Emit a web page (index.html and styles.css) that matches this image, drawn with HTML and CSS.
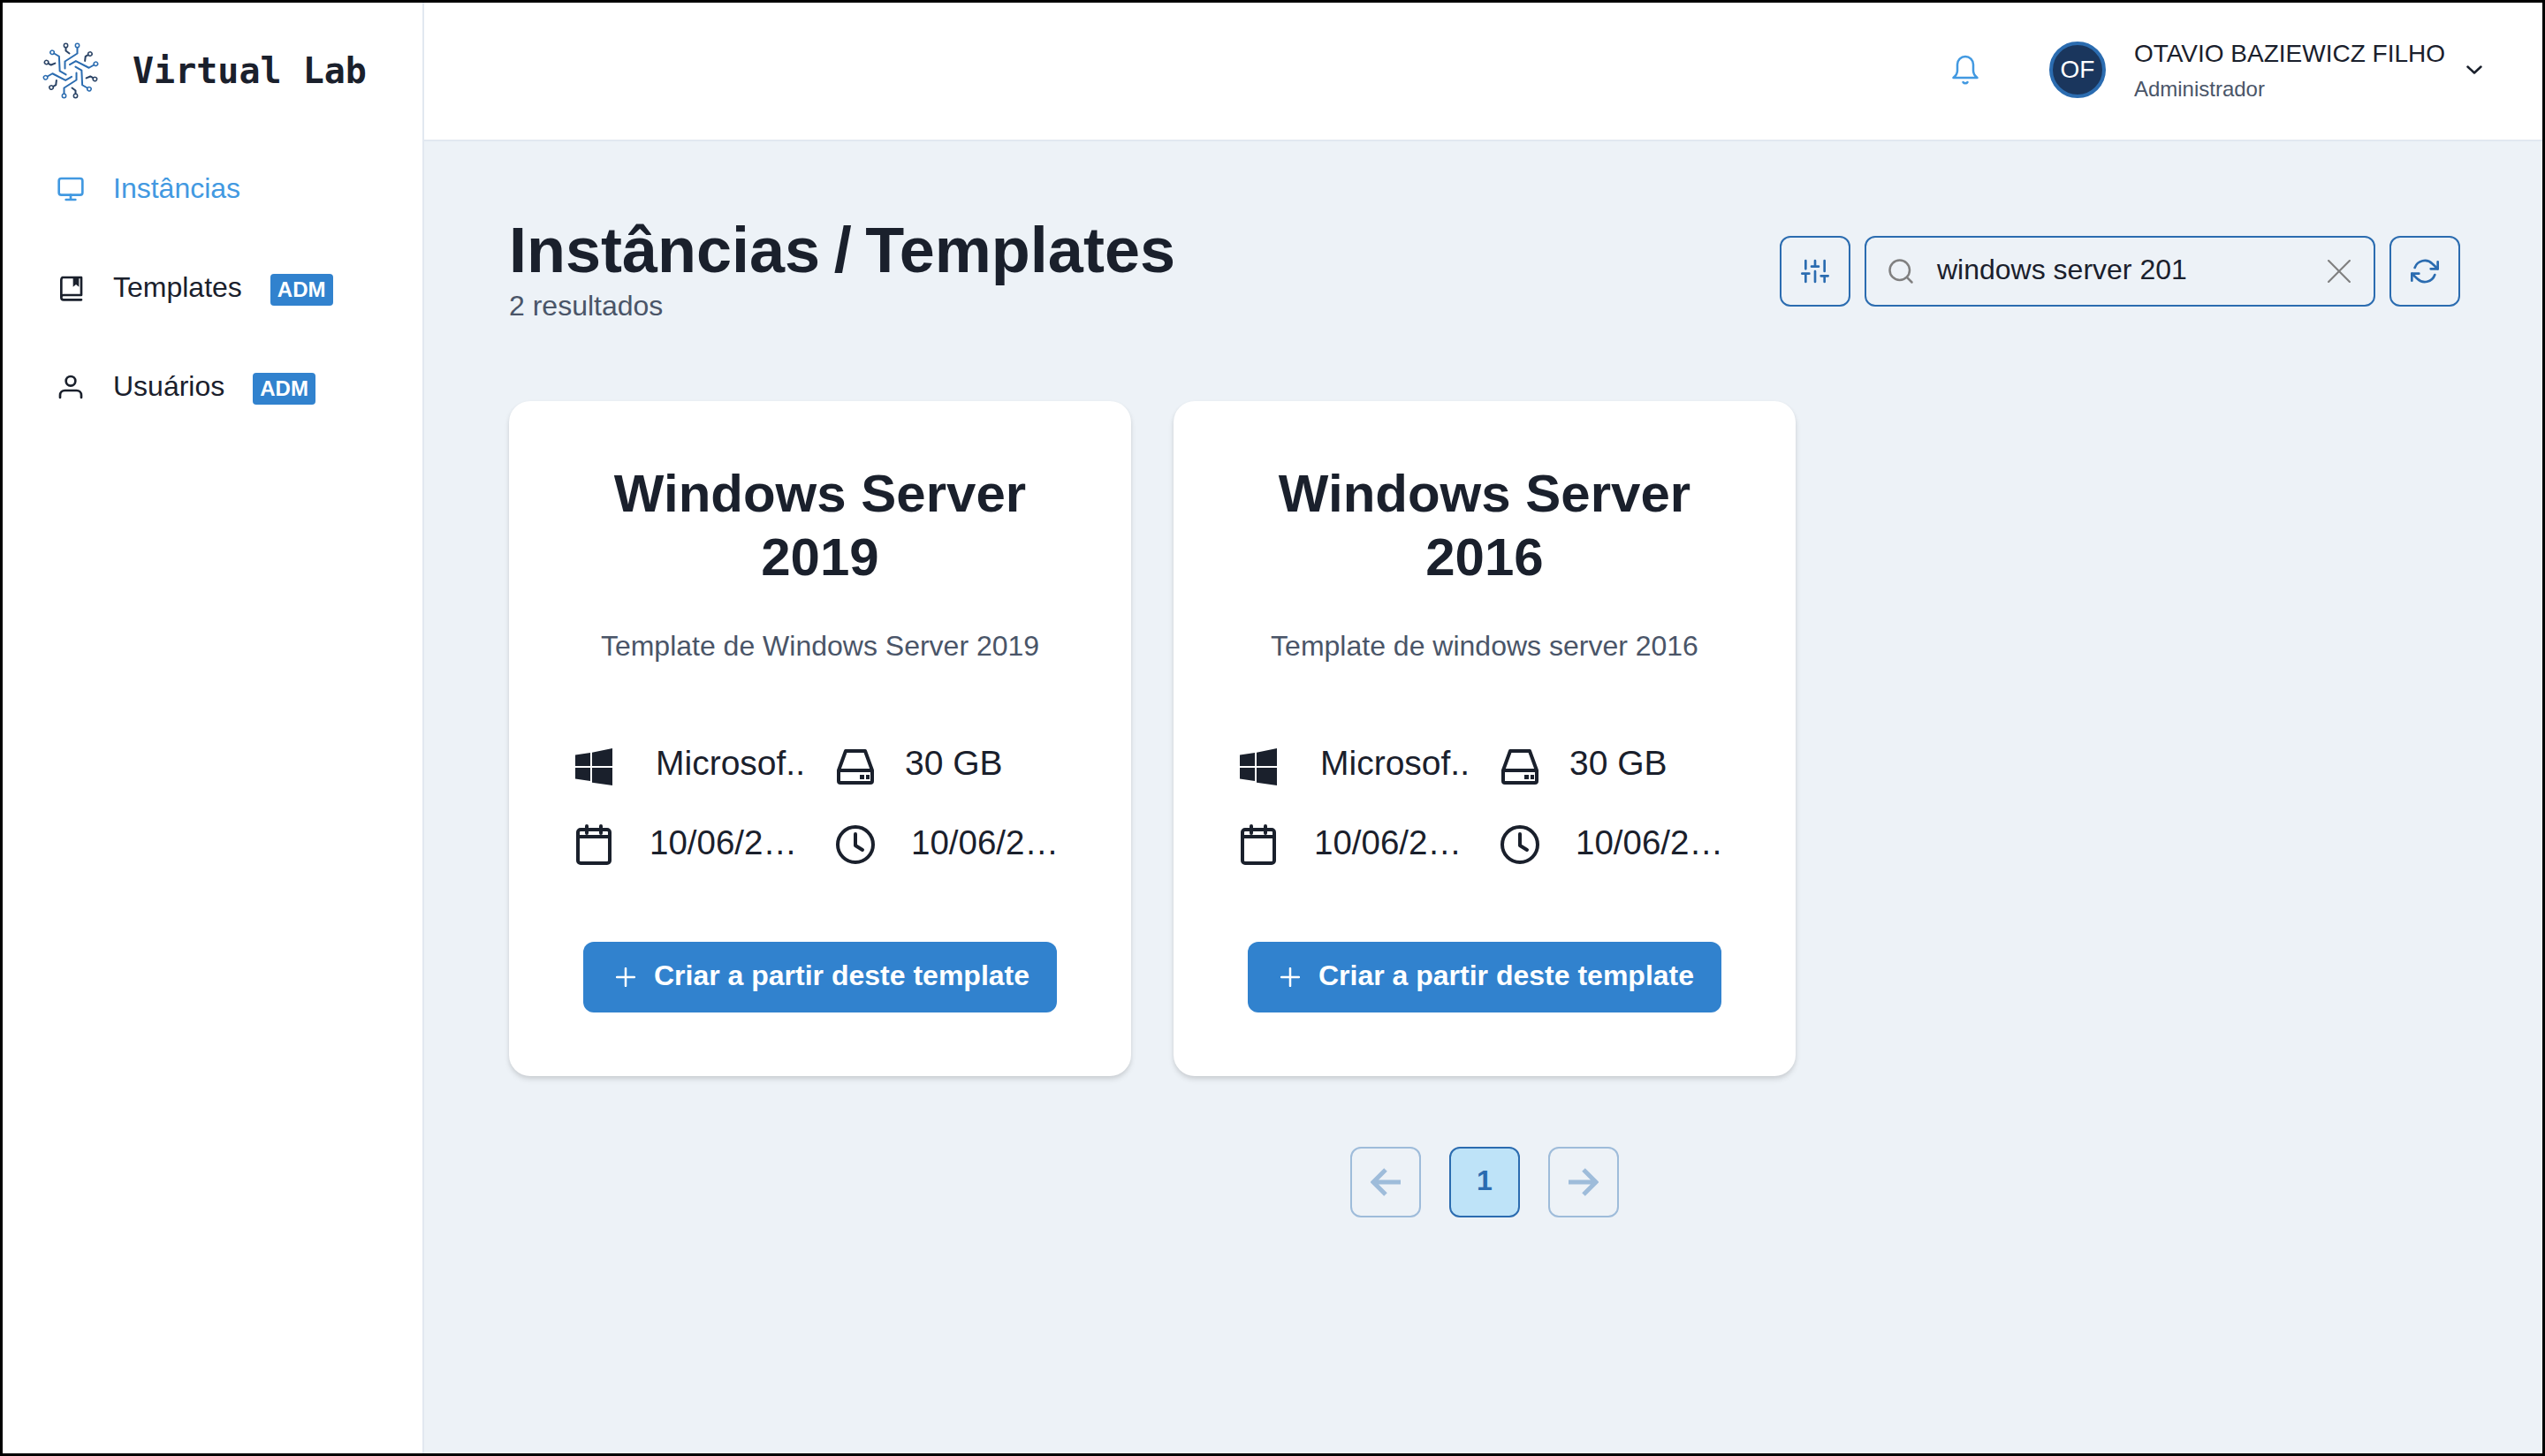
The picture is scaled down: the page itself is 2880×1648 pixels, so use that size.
FILE: index.html
```html
<!DOCTYPE html>
<html lang="pt-BR">
<head>
  <meta charset="UTF-8">
  <meta name="viewport" content="width=device-width, initial-scale=1.0">
  <title>Virtual Lab</title>
  <link rel="stylesheet" href="styles.css">
</head>
<body>
  <div class="app">
    <!-- Menu lateral -->
    <aside class="sidebar">
      <div class="brand">
        <svg class="brand-logo" viewBox="0 0 64 64" fill="none" stroke-linecap="round" stroke-linejoin="round">
          <defs>
            <g id="arm">
              <path d="M39.5 3.5v9l-14 9v8" stroke="#2b6cb0" stroke-width="2"/>
              <circle cx="39.5" cy="3.5" r="2.2" stroke="#2b6cb0" stroke-width="1.5" fill="#fff"/>
              <path d="M26.5 3.5v6l4 3" stroke="#2a4365" stroke-width="2"/>
              <circle cx="26.5" cy="3.5" r="2.2" stroke="#2a4365" stroke-width="1.5" fill="#fff"/>
            </g>
          </defs>
          <use href="#arm"/>
          <use href="#arm" transform="rotate(60 32 32)"/>
          <use href="#arm" transform="rotate(120 32 32)"/>
          <use href="#arm" transform="rotate(180 32 32)"/>
          <use href="#arm" transform="rotate(240 32 32)"/>
          <use href="#arm" transform="rotate(300 32 32)"/>
        </svg>
        <span class="brand-name">Virtual Lab</span>
      </div>
      <nav class="nav">
        <a class="nav-item nav-item-active">
          <svg class="nav-icon" viewBox="0 0 24 24" fill="none" stroke="currentColor" stroke-width="2" stroke-linecap="round" stroke-linejoin="round"><rect x="2" y="3" width="20" height="14" rx="2"/><path d="M8 21h8M12 17v4"/></svg>
          <span class="nav-label">Instâncias</span>
        </a>
        <a class="nav-item">
          <svg class="nav-icon" viewBox="0 0 24 24" fill="none" stroke="currentColor" stroke-width="2" stroke-linecap="round" stroke-linejoin="round"><path d="M21 18H6a2 2 0 0 0-2 2V5a3 3 0 0 1 1-2h16v15zM21 22H6a2 2 0 0 1-2-2"/><path d="M14 3h5v8l-2.500-2-2.500 2z" fill="currentColor" stroke="none"/></svg>
          <span class="nav-label">Templates</span>
          <span class="badge">ADM</span>
        </a>
        <a class="nav-item">
          <svg class="nav-icon" viewBox="0 0 24 24" fill="none" stroke="currentColor" stroke-width="2" stroke-linecap="round" stroke-linejoin="round"><circle cx="12" cy="7" r="4"/><path d="M3 21v-2a4 4 0 0 1 4-4h10a4 4 0 0 1 4 4v2"/></svg>
          <span class="nav-label">Usuários</span>
          <span class="badge">ADM</span>
        </a>
      </nav>
    </aside>

    <div class="content">
      <!-- Barra superior -->
      <header class="topbar">
        <svg class="bell" viewBox="0 0 30 34" fill="none" stroke="currentColor" stroke-width="2.500" stroke-linecap="round" stroke-linejoin="round"><path d="M15 2a9 9 0 0 0-9 9v7c0 3-2 6-4.500 8h27c-2.500-2-4.500-5-4.500-8v-7a9 9 0 0 0-9-9z"/><path d="M12.500 31a3 3 0 0 0 5 0"/></svg>
        <div class="avatar">OF</div>
        <div class="user">
          <div class="user-name">OTAVIO BAZIEWICZ FILHO</div>
          <div class="user-role">Administrador</div>
        </div>
        <svg class="chevron" viewBox="0 0 18 10" fill="none" stroke="currentColor" stroke-width="2.500" stroke-linecap="round" stroke-linejoin="round"><path d="M1.500 1.500L9 8.500l7.500-7"/></svg>
      </header>

      <main class="page">
        <div class="page-head">
          <div>
            <h1 class="page-title">Instâncias / Templates</h1>
            <div class="page-count">2 resultados</div>
          </div>
          <div class="toolbar">
            <button class="icon-btn">
              <svg class="toolbar-icon" viewBox="0 0 24 24" fill="none" stroke="currentColor" stroke-width="2" stroke-linecap="round" stroke-linejoin="round"><path d="M4 21v-7M4 10V3M12 21v-9M12 8V3M20 21v-5M20 12V3M1 14h6M9 8h6M17 16h6"/></svg>
            </button>
            <div class="search">
              <svg class="search-icon" viewBox="0 0 24 24" fill="none" stroke="currentColor" stroke-width="2" stroke-linecap="round" stroke-linejoin="round"><circle cx="11" cy="11" r="9"/><path d="M22 22l-4.500-4.500"/></svg>
              <span class="search-text">windows server 201</span>
              <svg class="search-clear" viewBox="0 0 24 24" fill="none" stroke="currentColor" stroke-width="2" stroke-linecap="round"><path d="M1 1l22 22M23 1L1 23"/></svg>
            </div>
            <button class="icon-btn">
              <svg class="toolbar-icon" viewBox="0 0 24 24" fill="none" stroke="currentColor" stroke-width="2" stroke-linecap="round" stroke-linejoin="round"><path d="M23 4v6h-6M1 20v-6h6"/><path d="M3.510 9a9 9 0 0 1 14.850-3.360L23 10M1 14l4.640 4.360A9 9 0 0 0 20.490 15"/></svg>
            </button>
          </div>
        </div>

        <div class="cards">
          <article class="card">
            <h2 class="card-title">Windows Server 2019</h2>
            <p class="card-desc">Template de Windows Server 2019</p>
            <div class="specs">
              <div class="spec">
                <svg class="spec-icon" viewBox="0 0 48 48" fill="currentColor"><path d="M3 10.500l17-2.400v15H3zM22 7.800L45 3v20H22zM3 25h17v15L3 37.500zM22 25h23v20l-23-3.300z"/></svg>
                <span class="spec-text spec-os">Microsof..</span>
              </div>
              <div class="spec">
                <svg class="spec-icon" viewBox="0 0 48 48" fill="none" stroke="currentColor" stroke-width="4" stroke-linejoin="round"><path d="M13 6h22l8 22v12a2 2 0 0 1-2 2H7a2 2 0 0 1-2-2V28z"/><path d="M5 28h38"/><path d="M29 33h5v5h-5zM36 33h4v5h-4z" fill="currentColor" stroke="none"/></svg>
                <span class="spec-text spec-disk">30 GB</span>
              </div>
              <div class="spec">
                <svg class="spec-icon" viewBox="0 0 48 48" fill="none" stroke="currentColor" stroke-width="4" stroke-linecap="round" stroke-linejoin="round"><rect x="6" y="7" width="36" height="38" rx="3"/><path d="M6 15h36M16 3v8M32 3v8"/></svg>
                <span class="spec-text spec-date">10/06/2…</span>
              </div>
              <div class="spec">
                <svg class="spec-icon" viewBox="0 0 48 48" fill="none" stroke="currentColor" stroke-width="4" stroke-linecap="round" stroke-linejoin="round"><circle cx="24" cy="24" r="20"/><path d="M24 12v13l8 5"/></svg>
                <span class="spec-text spec-date">10/06/2…</span>
              </div>
            </div>
            <button class="create-btn">
              <svg class="create-icon" viewBox="0 0 22 22" fill="none" stroke="currentColor" stroke-width="2.500" stroke-linecap="round"><path d="M11 1v20M1 11h20"/></svg>
              Criar a partir deste template
            </button>
          </article>

          <article class="card">
            <h2 class="card-title">Windows Server 2016</h2>
            <p class="card-desc">Template de windows server 2016</p>
            <div class="specs">
              <div class="spec">
                <svg class="spec-icon" viewBox="0 0 48 48" fill="currentColor"><path d="M3 10.500l17-2.400v15H3zM22 7.800L45 3v20H22zM3 25h17v15L3 37.500zM22 25h23v20l-23-3.300z"/></svg>
                <span class="spec-text spec-os">Microsof..</span>
              </div>
              <div class="spec">
                <svg class="spec-icon" viewBox="0 0 48 48" fill="none" stroke="currentColor" stroke-width="4" stroke-linejoin="round"><path d="M13 6h22l8 22v12a2 2 0 0 1-2 2H7a2 2 0 0 1-2-2V28z"/><path d="M5 28h38"/><path d="M29 33h5v5h-5zM36 33h4v5h-4z" fill="currentColor" stroke="none"/></svg>
                <span class="spec-text spec-disk">30 GB</span>
              </div>
              <div class="spec">
                <svg class="spec-icon" viewBox="0 0 48 48" fill="none" stroke="currentColor" stroke-width="4" stroke-linecap="round" stroke-linejoin="round"><rect x="6" y="7" width="36" height="38" rx="3"/><path d="M6 15h36M16 3v8M32 3v8"/></svg>
                <span class="spec-text spec-date">10/06/2…</span>
              </div>
              <div class="spec">
                <svg class="spec-icon" viewBox="0 0 48 48" fill="none" stroke="currentColor" stroke-width="4" stroke-linecap="round" stroke-linejoin="round"><circle cx="24" cy="24" r="20"/><path d="M24 12v13l8 5"/></svg>
                <span class="spec-text spec-date">10/06/2…</span>
              </div>
            </div>
            <button class="create-btn">
              <svg class="create-icon" viewBox="0 0 22 22" fill="none" stroke="currentColor" stroke-width="2.500" stroke-linecap="round"><path d="M11 1v20M1 11h20"/></svg>
              Criar a partir deste template
            </button>
          </article>
        </div>

        <!-- Paginação -->
        <div class="pager">
          <button class="page-btn page-btn-off">
            <svg class="page-arrow" viewBox="0 0 34 34" fill="none" stroke="currentColor" stroke-width="5"><path d="M34 17H4M17 3L3 17l14 14"/></svg>
          </button>
          <button class="page-btn page-btn-on">1</button>
          <button class="page-btn page-btn-off">
            <svg class="page-arrow" viewBox="0 0 34 34" fill="none" stroke="currentColor" stroke-width="5"><path d="M0 17h30M17 3l14 14-14 14"/></svg>
          </button>
        </div>
      </main>
    </div>
  </div>
  <div class="frame"></div>
</body>
</html>
```
FILE: styles.css
```css
* {
  box-sizing: border-box;
}

body {
  margin: 0;
  font-family: "Liberation Sans", Arial, sans-serif;
  color: #1a202c;
  background: #fff;
}

button {
  font-family: inherit;
  background: none;
  padding: 0;
}

/* moldura preta da captura, por cima de tudo */
.frame {
  position: fixed;
  inset: 0;
  border: 3px solid #000;
  pointer-events: none;
}

.app {
  display: flex;
  height: 100vh;
  overflow: hidden;
}

.sidebar {
  width: 480px;
  flex-shrink: 0;
  background: #fff;
  border-right: 2px solid #e2e8f0;
}

.brand {
  display: flex;
  align-items: center;
  height: 160px;
  padding-left: 48px;
}

.brand-logo {
  width: 64px;
  height: 64px;
}

.brand-name {
  margin-left: 38px;
  font-family: "DejaVu Sans Mono", monospace;
  font-size: 40px;
  font-weight: bold;
}

.nav {
  display: flex;
  flex-direction: column;
  gap: 64px;
  padding: 30px 0 0 64px;
}

.nav-item {
  display: flex;
  align-items: center;
  height: 48px;
  font-size: 32px;
}

.nav-item-active {
  color: #4299e1;
}

.nav-icon {
  width: 32px;
  height: 32px;
  margin-right: 32px;
}

.nav-label {
  margin-bottom: 2px;
}

.badge {
  margin-left: 32px;
  padding: 0 8px;
  height: 36px;
  line-height: 36px;
  border-radius: 4px;
  background: #3182ce;
  color: #fff;
  font-size: 24px;
  font-weight: bold;
  position: relative;
  top: 2px;
}

.content {
  flex: 1;
  min-width: 0;
  background: #edf2f7;
}

.topbar {
  display: flex;
  align-items: center;
  height: 160px;
  padding-right: 71px;
  background: #fff;
  border-bottom: 2px solid #e2e8f0;
}

.bell {
  width: 30px;
  height: 34px;
  margin-left: auto;
  margin-right: 80px;
  color: #4299e1;
}

.avatar {
  display: flex;
  align-items: center;
  justify-content: center;
  width: 64px;
  height: 64px;
  border: 4px solid #2b6cb0;
  border-radius: 50%;
  background: #1a365d;
  color: #fff;
  font-size: 28px;
}

.user {
  margin-left: 32px;
  margin-right: 24px;
}

.user-name {
  font-size: 28px;
  line-height: 40px;
}

.user-role {
  margin-top: 4px;
  font-size: 24px;
  line-height: 32px;
  color: #4a5568;
}

.chevron {
  width: 18px;
  height: 10px;
}

.page {
  padding: 86px 96px;
}

.page-head {
  display: flex;
  justify-content: space-between;
  align-items: center;
  margin-bottom: 88px;
}

.page-title {
  margin: 0;
  font-size: 72px;
  line-height: 74px;
  word-spacing: -4.5px;
}

.page-count {
  margin-top: 6px;
  font-size: 32px;
  line-height: 40px;
  color: #4a5568;
}

.toolbar {
  display: flex;
  gap: 16px;
  margin-top: 2px;
}

.icon-btn {
  display: flex;
  align-items: center;
  justify-content: center;
  width: 80px;
  height: 80px;
  border: 2px solid #2b6cb0;
  border-radius: 12px;
  color: #2b6cb0;
}

.toolbar-icon {
  width: 32px;
  height: 32px;
}

.search {
  display: flex;
  align-items: center;
  width: 578px;
  height: 80px;
  padding: 0 26px 0 24px;
  border: 2px solid #2b6cb0;
  border-radius: 12px;
}

.search-icon {
  width: 30px;
  height: 30px;
  color: #808080;
}

.search-text {
  margin-left: 26px;
  margin-bottom: 4px;
  font-size: 32px;
}

.search-clear {
  width: 26px;
  height: 26px;
  margin-left: auto;
  color: #808080;
}

.cards {
  display: flex;
  flex-wrap: wrap;
  gap: 48px;
}

.card {
  display: flex;
  flex-direction: column;
  align-items: center;
  width: 704px;
  padding: 69px 0 72px;
  background: #fff;
  border-radius: 24px;
  box-shadow: 0 4px 6px rgba(0, 0, 0, 0.1), 0 2px 4px rgba(0, 0, 0, 0.06);
}

.card-title {
  width: 500px;
  margin: 0;
  font-size: 60px;
  line-height: 72px;
  text-align: center;
}

.card-desc {
  margin: 40px 0 0;
  font-size: 32px;
  line-height: 48px;
  color: #4a5568;
}

.specs {
  display: grid;
  grid-template-columns: 280px 280px;
  gap: 40px 16px;
  align-self: flex-start;
  margin: 89px 0 86px 72px;
}

.spec {
  display: flex;
  align-items: center;
  height: 48px;
  min-width: 0;
}

.spec-icon {
  width: 48px;
  height: 48px;
  flex-shrink: 0;
}

.spec-text {
  font-size: 39px;
  white-space: nowrap;
}

.spec-os {
  margin-left: 46px;
  margin-bottom: 8px;
}

.spec-disk {
  margin-left: 32px;
  margin-bottom: 8px;
}

.spec-date {
  margin-left: 39px;
  margin-bottom: 5px;
  font-size: 38.5px;
}

.create-btn {
  display: flex;
  align-items: center;
  justify-content: center;
  width: 536px;
  height: 80px;
  padding: 0 0 4px 6px;
  border: none;
  border-radius: 12px;
  background: #3182ce;
  color: #fff;
  font-size: 32px;
  font-weight: bold;
}

.create-icon {
  width: 22px;
  height: 22px;
  margin-top: 4px;
  margin-right: 21px;
}

.pager {
  display: flex;
  justify-content: center;
  gap: 32px;
  margin-top: 80px;
}

.page-btn {
  display: flex;
  align-items: center;
  justify-content: center;
  width: 80px;
  height: 80px;
  border: 2px solid #2b6cb0;
  border-radius: 12px;
  color: #2b6cb0;
  font-size: 32px;
  font-weight: bold;
}

.page-btn-on {
  padding-bottom: 4px;
  background: #bee3f8;
}

.page-btn-off {
  opacity: 0.4;
}

.page-arrow {
  width: 34px;
  height: 34px;
}
```
